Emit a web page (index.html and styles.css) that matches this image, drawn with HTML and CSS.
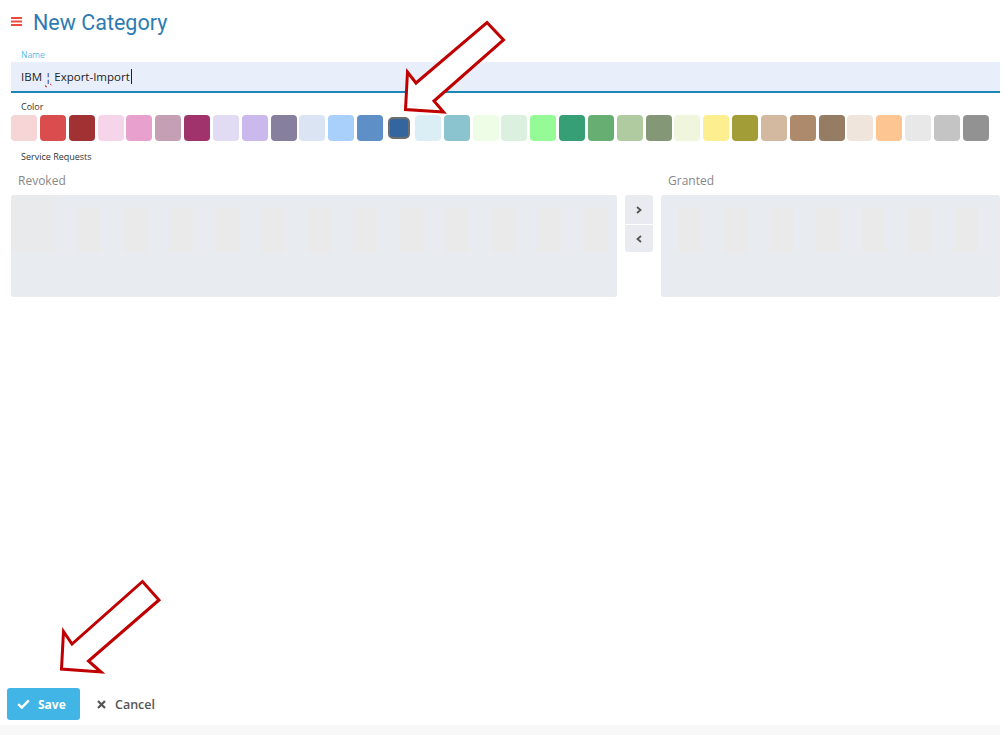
FILE: index.html
```html
<!DOCTYPE html>
<html>
<head>
<meta charset="utf-8">
<link rel="stylesheet" href="styles.css">
</head>
<body>
<div class="page">
  <header class="header">
    <svg class="burger" width="11" height="9" viewBox="0 0 11 9"><rect x="0" y="0" width="11" height="2" fill="#ee4b3c"/><rect x="0" y="3.5" width="11" height="2" fill="#ee4b3c"/><rect x="0" y="7" width="11" height="2" fill="#ee4b3c"/></svg>
    <h1 class="title">New Category</h1>
  </header>

  <div class="form">
    <div class="field">
      <label class="label label-name">Name</label>
      <div class="input"><span class="input-text">IBM <span class="pipe">¦</span> Export-Import</span><span class="caret"></span></div>
    </div>

    <div class="field">
      <label class="label label-color">Color</label>
      <div class="swatches" id="swatches"></div>
    </div>

    <div class="field">
      <label class="label label-sr">Service Requests</label>
      <div class="dual">
        <div class="col col-left">
          <div class="col-title">Revoked</div>
          <div class="listbox">
            <div class="skel first"></div>
            <div class="skel-row">
              <span></span><span></span><span></span><span></span><span></span><span></span><span></span><span></span><span></span><span></span><span></span><span></span>
            </div>
          </div>
        </div>
        <div class="movers">
          <button class="mv mv-top"><svg width="6" height="8" viewBox="0 0 6 8"><path d="M1 1 L4.5 4 L1 7" fill="none" stroke="#555" stroke-width="1.8"/></svg></button>
          <button class="mv mv-bot"><svg width="6" height="8" viewBox="0 0 6 8"><path d="M5 1 L1.5 4 L5 7" fill="none" stroke="#555" stroke-width="1.8"/></svg></button>
        </div>
        <div class="col col-right">
          <div class="col-title">Granted</div>
          <div class="listbox">
            <div class="skel-row r">
              <span></span><span></span><span></span><span></span><span></span><span></span><span></span>
            </div>
          </div>
        </div>
      </div>
    </div>
  </div>

  <div class="spacer"></div>

  <div class="actions">
    <button class="btn-save"><svg width="13" height="10" viewBox="0 0 13 10"><path d="M1.2 5.2 L4.8 8.6 L11.8 1.4" fill="none" stroke="#fff" stroke-width="2.4"/></svg>Save</button>
    <button class="btn-cancel"><svg width="9" height="9" viewBox="0 0 9 9"><path d="M1 1 L8 8 M8 1 L1 8" stroke="#555" stroke-width="2.2"/></svg>Cancel</button>
  </div>
  <div class="footer-bar"></div>

  <svg class="annot" width="1005" height="735" viewBox="0 0 1005 735">
    <polygon points="405.5,109.5 407.5,72 416,83 487,22.5 503.5,40 434,101 443.5,112" fill="#fff" stroke="#c00000" stroke-width="3" stroke-linejoin="miter"/>
    <polygon points="61.5,669 63.5,631.5 72,644 142.5,581.5 159,600 88.5,661 101,672" fill="#fff" stroke="#c00000" stroke-width="3" stroke-linejoin="miter"/>
  </svg>
</div>
<script>
(function(){
  var colors=["#f5d5d5","#d94d4e","#a03233","#f6d5eb","#e8a0cf","#c59fb4","#a0336b","#e1dbf3","#cbb9ed","#867f9e","#dae4f3","#a9cffb","#5e8fc7","#33659f","#dbedf5","#8bc3cf","#eefde5","#dbf0de","#95fb97","#369f76","#66ae72","#b0cb9f","#849878","#f0f5dd","#fdee8f","#a39d38","#d3b9a0","#ac8a6b","#967c63","#f0e5dc","#fdc591","#e8e8e8","#c4c4c4","#929292"];
  var box=document.getElementById('swatches');
  colors.forEach(function(c,i){
    var d=document.createElement('div');
    d.className='swatch'+(i===13?' selected':'');
    d.style.background=c;
    box.appendChild(d);
  });
})();
</script>
</body>
</html>
```

FILE: styles.css
```css
* { box-sizing: border-box; }
html, body { margin: 0; padding: 0; background: #fff; }
body { font-family: "Open Sans", "Liberation Sans", sans-serif; color: #333; }

.page {
  position: relative;
  width: 1005px;
  height: 735px;
  display: flex;
  flex-direction: column;
  overflow: hidden;
}

.header {
  display: flex;
  align-items: center;
  height: 44px;
  padding-left: 11px;
  padding-top: 1px;
}
.burger { margin-right: 11px; margin-top: -2px; }
.title {
  margin: 0;
  font-family: Roboto, "Liberation Sans", sans-serif;
  font-weight: 400;
  font-size: 21.5px;
  color: #2d7bb2;
  line-height: 1;
}

.form {
  width: 1000px;
  padding-left: 11px;
}
.field { display: flex; flex-direction: column; }
.label {
  font-size: 9px;
  line-height: 10px;
  padding-left: 10px;
  color: #333;
}
.label-name { color: #5cb9e6; margin-top: 6px; margin-bottom: 2px; font-size: 8.5px; }
.label-color { margin-top: 9px; margin-bottom: 3px; }
.label-sr { margin-top: 11px; }

.input {
  height: 31px;
  background: #e8effb;
  border-bottom: 2px solid #1d86b9;
  display: flex;
  align-items: center;
  padding-left: 10px;
  font-size: 11.5px;
  color: #222;
}
.pipe { text-decoration: underline wavy #d33; text-underline-offset: 2px; }
.caret { display: inline-block; width: 1px; height: 15px; background: #222; margin-left: 1px; }

.swatches {
  display: flex;
  gap: 2.85px;
}
.swatch {
  width: 26px;
  height: 26px;
  border-radius: 4px;
  flex: 0 0 auto;
}
.swatch.selected {
  border: 2px solid #6e6e6e;
  width: 22px;
  height: 22px;
  margin: 2px;
  border-radius: 5px;
}

.dual {
  display: flex;
  margin-top: 11px;
}
.col { display: flex; flex-direction: column; }
.col-left { width: 606px; }
.col-right { flex: 1; }
.col-title {
  font-size: 12px;
  color: #888;
  line-height: 16px;
  padding-left: 7px;
  margin-bottom: 6px;
}
.listbox {
  position: relative;
  height: 102px;
  background: #e8ebef;
  border-radius: 3px;
  overflow: hidden;
}
.skel.first {
  position: absolute;
  left: 0; top: 0;
  width: 44px; height: 58px;
  background: #e9eaec;
}
.skel-row {
  display: flex;
  gap: 22px;
  padding: 13px 0 0 66px;
}
.skel-row span {
  width: 24px;
  height: 45px;
  background: #eaeaeb;
}
.skel-row.r { padding-left: 17px; }

.movers {
  width: 44px;
  padding: 22px 8px 0 8px;
  display: flex;
  flex-direction: column;
}
.mv {
  width: 28px;
  border: none;
  background: #e8ebef;
  display: flex;
  align-items: center;
  justify-content: center;
  padding: 0;
}
.mv-top { border-radius: 3px 3px 0 0; border-bottom: 1px solid #fff; height: 30px; }
.mv-bot { border-radius: 0 0 3px 3px; height: 27px; }

.spacer { flex: 1; }

.actions {
  display: flex;
  align-items: center;
  padding-left: 7px;
  height: 32px;
  margin-bottom: 5px;
}
.btn-save {
  height: 32px;
  width: 73px;
  background: #41b5e6;
  border: none;
  border-radius: 3px;
  color: #fff;
  font-family: "Open Sans", "Liberation Sans", sans-serif;
  font-weight: 700;
  font-size: 12px;
  display: flex;
  align-items: center;
  padding-left: 10px;
  gap: 8px;
}
.btn-cancel {
  margin-left: 17px;
  border: none;
  background: none;
  color: #555;
  font-family: "Open Sans", "Liberation Sans", sans-serif;
  font-weight: 600;
  font-size: 12.5px;
  display: flex;
  align-items: center;
  gap: 9px;
  padding: 0;
}
.footer-bar {
  width: 1000px;
  height: 10px;
  background: #f8f8f8;
}

.annot {
  position: absolute;
  left: 0; top: 0;
  pointer-events: none;
}
```
